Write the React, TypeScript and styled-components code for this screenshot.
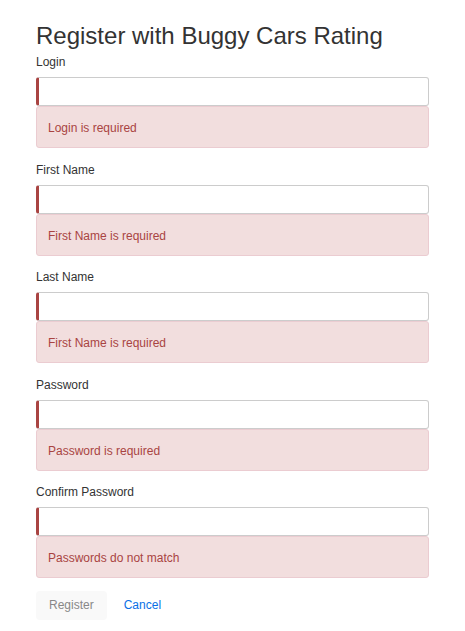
import { createGlobalStyle } from 'styled-components'
import styled from 'styled-components'

const GlobalStyle = createGlobalStyle`
  body {
    margin: 0;
    background: #fff;
    font-family: "Liberation Sans", Arial, Helvetica, sans-serif;
    color: #333;
  }
`

const Page = styled.div`
  padding: 23px 36px 0;
`

const Title = styled.h2`
  margin: 0 0 4px;
  font-size: 24px;
  font-weight: 400;
  line-height: 1.1;
  white-space: nowrap;
  color: #333;
`

const Group = styled.div`
  margin-bottom: 12.5px;
`

const Label = styled.label`
  display: block;
  font-size: 12px;
  line-height: 18px;
  margin-bottom: 6px;
  color: #333;
`

const Input = styled.input<{ $invalid?: boolean }>`
  display: block;
  box-sizing: border-box;
  width: 100%;
  height: 29px;
  margin: 0;
  padding: 4px 10px;
  font: inherit;
  font-size: 12px;
  border: 1px solid #ccc;
  border-left: ${p => (p.$invalid ? '3px solid #a94442' : '1px solid #ccc')};
  border-radius: 3px;
  outline: none;
  background: #fff;
`

const Alert = styled.div`
  box-sizing: border-box;
  height: 42px;
  padding: 12px 11px;
  font-size: 12px;
  line-height: 18px;
  color: #a94442;
  background: #f2dede;
  border: 1px solid #ebccd1;
  border-radius: 3px;
`

const Actions = styled.div`
  display: flex;
  align-items: center;
  gap: 4px;
`

const Button = styled.button<{ $link?: boolean }>`
  box-sizing: border-box;
  height: 29px;
  padding: 0 13px;
  font-family: inherit;
  font-size: 12px;
  border: none;
  border-radius: 4px;
  background: ${p => (p.$link ? 'transparent' : '#f9f9f9')};
  color: ${p => (p.$link ? '#0a6fe6' : '#888')};
  cursor: ${p => (p.$link ? 'pointer' : 'default')};
`

const fields = [
  { label: 'Login', error: 'Login is required', type: 'text' },
  { label: 'First Name', error: 'First Name is required', type: 'text' },
  { label: 'Last Name', error: 'First Name is required', type: 'text' },
  { label: 'Password', error: 'Password is required', type: 'password' },
  { label: 'Confirm Password', error: 'Passwords do not match', type: 'password' },
]

export default function App() {
  return (
    <>
      <GlobalStyle />
      <Page>
        <Title>Register with Buggy Cars Rating</Title>
        {fields.map(f => (
          <Group key={f.label}>
            <Label>{f.label}</Label>
            <Input type={f.type} $invalid />
            <Alert>{f.error}</Alert>
          </Group>
        ))}
        <Actions>
          <Button disabled>Register</Button>
          <Button $link>Cancel</Button>
        </Actions>
      </Page>
    </>
  )
}
